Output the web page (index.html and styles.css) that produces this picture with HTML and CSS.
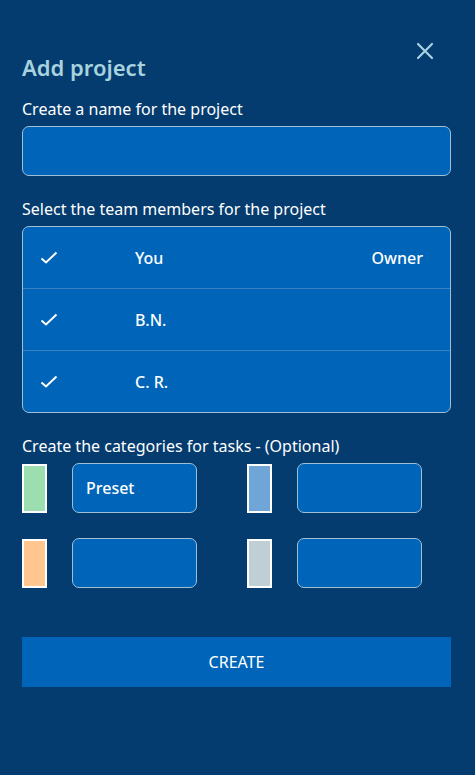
FILE: index.html
```html
<!DOCTYPE html>
<html lang="en">
<head>
<meta charset="utf-8">
<title>Add project</title>
<link rel="stylesheet" href="styles.css">
</head>
<body>
<div class="page">
  <div class="header">
    <h1 class="title">Add project</h1>
    <button class="close" aria-label="Close">
      <svg width="18" height="18" viewBox="0 0 18 18"><path d="M2 2 L16 16 M16 2 L2 16" stroke="#a7d2de" stroke-width="2.2" stroke-linecap="round" fill="none"/></svg>
    </button>
  </div>

  <label class="label">Create a name for the project</label>
  <div class="input name-input"></div>

  <label class="label gap-top">Select the team members for the project</label>
  <div class="members">
    <div class="member">
      <svg class="check" width="18" height="14" viewBox="0 0 18 14"><path d="M1.5 7.5 L6 11.5 L16.5 1.5" stroke="#fff" stroke-width="2" fill="none"/></svg>
      <span class="member-name">You</span>
      <span class="member-role">Owner</span>
    </div>
    <div class="member">
      <svg class="check" width="18" height="14" viewBox="0 0 18 14"><path d="M1.5 7.5 L6 11.5 L16.5 1.5" stroke="#fff" stroke-width="2" fill="none"/></svg>
      <span class="member-name">B.N.</span>
    </div>
    <div class="member">
      <svg class="check" width="18" height="14" viewBox="0 0 18 14"><path d="M1.5 7.5 L6 11.5 L16.5 1.5" stroke="#fff" stroke-width="2" fill="none"/></svg>
      <span class="member-name">C. R.</span>
    </div>
  </div>

  <label class="label gap-top">Create the categories for tasks - (Optional)</label>
  <div class="categories">
    <div class="category"><span class="swatch green"></span><div class="input cat-input">Preset</div></div>
    <div class="category"><span class="swatch blue"></span><div class="input cat-input"></div></div>
    <div class="category"><span class="swatch orange"></span><div class="input cat-input"></div></div>
    <div class="category"><span class="swatch gray"></span><div class="input cat-input"></div></div>
  </div>

  <button class="create">CREATE</button>
</div>
</body>
</html>
```

FILE: styles.css
```css
* { box-sizing: border-box; }
html, body {
  margin: 0;
  padding: 0;
  background: #043c6f;
  height: 100%;
}
body {
  font-family: "Noto Sans", "Open Sans", sans-serif;
  color: #ffffff;
}
.page {
  width: 475px;
  padding: 0 24px 0 22px;
}
.header {
  display: flex;
  justify-content: space-between;
  align-items: flex-start;
  padding-top: 42px;
}
.title {
  margin: 10px 0 0 0;
  font-size: 22px;
  line-height: 30px;
  font-weight: 600;
  color: #a7d2de;
}
.close {
  background: none;
  border: 0;
  padding: 0;
  margin-right: 17px;
  width: 18px;
  height: 18px;
  cursor: pointer;
}
.close svg { display: block; }
.label {
  display: block;
  font-size: 16px;
  line-height: 20px;
  margin-top: 17px;
  margin-bottom: 7px;
}
.label.gap-top { margin-top: 23px; }
.input {
  background: #0065b8;
  border: 1px solid #9fbfd6;
  border-radius: 7px;
}
.name-input { height: 50px; }
.members {
  background: #0065b8;
  border: 1px solid #9fbfd6;
  border-radius: 7px;
}
.member {
  display: flex;
  align-items: center;
  height: 61px;
  padding: 0 27px 0 17px;
  font-size: 16px;
  font-weight: 500;
}
.member + .member {
  border-top: 1px solid #3a80c0;
  height: 62px;
}
.check { display: block; flex: none; }
.member-name { margin-left: 77px; flex: 1; }
.categories {
  display: grid;
  grid-template-columns: 175px 175px;
  column-gap: 50px;
  row-gap: 25px;
}
.category {
  display: flex;
  align-items: center;
  gap: 25px;
}
.swatch {
  width: 25px;
  height: 49px;
  border: 2px solid #ffffff;
  flex: none;
}
.green { background: #9ddeb1; }
.blue { background: #6fa5d7; }
.orange { background: #ffc690; }
.gray { background: #c0cfd6; }
.cat-input {
  width: 125px;
  height: 50px;
  display: flex;
  align-items: center;
  padding-left: 13px;
  font-size: 16px;
  font-weight: 500;
}
.create {
  display: block;
  width: 429px;
  height: 50px;
  margin-top: 49px;
  background: #0065b8;
  border: 0;
  color: #ffffff;
  font-family: "Noto Sans", "Open Sans", sans-serif;
  font-size: 16px;
}
```
